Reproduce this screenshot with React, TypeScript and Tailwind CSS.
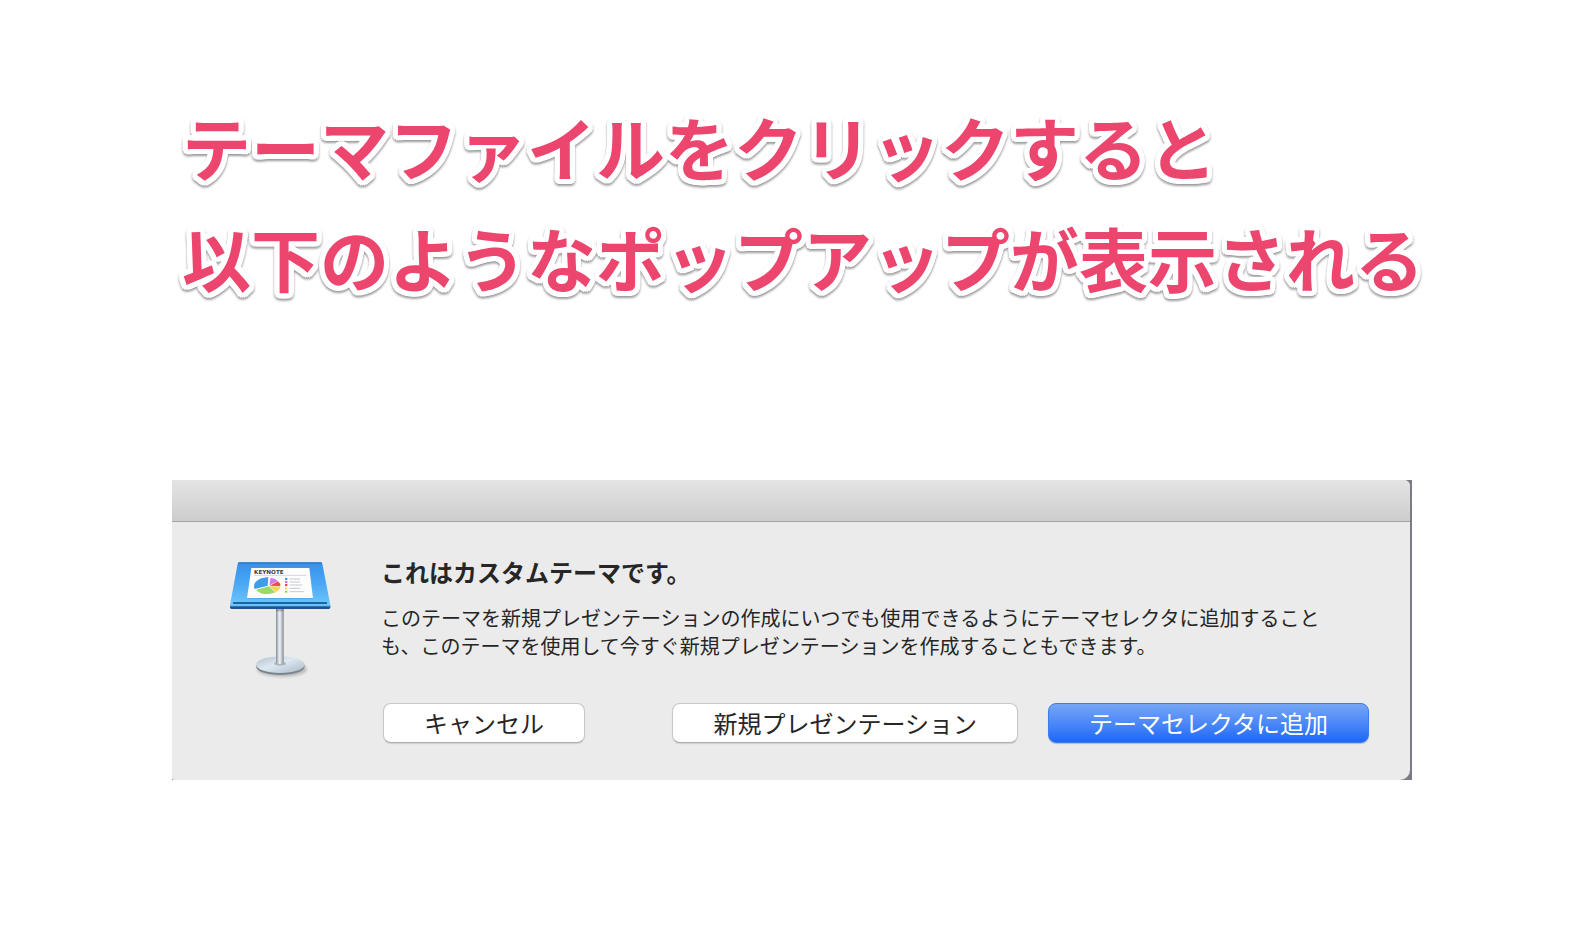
import clsx from "clsx";
import type { ButtonHTMLAttributes } from "react";

const legend = [
  { y: 87, color: "#3d9be9", width: 32 },
  { y: 96, color: "#c86be6", width: 32 },
  { y: 105, color: "#e8484c", width: 38 },
  { y: 115, color: "#fbd84b", width: 32 },
  { y: 125, color: "#86d65a", width: 42 },
];

const KeynoteIcon = () => (
  <svg
    className="w-[120px] h-[140px] shrink-0"
    viewBox="0 0 360 420"
    aria-hidden="true"
  >
    <defs>
      <linearGradient id="board" x1="0" y1="0" x2="0" y2="1">
        <stop offset="0" stopColor="#3590ee" />
        <stop offset="0.5" stopColor="#4ca8f4" />
        <stop offset="1" stopColor="#6fc8fb" />
      </linearGradient>
      <linearGradient id="pole" x1="0" y1="0" x2="1" y2="0">
        <stop offset="0" stopColor="#85888c" />
        <stop offset="0.25" stopColor="#c3cbd2" />
        <stop offset="0.5" stopColor="#eef4f9" />
        <stop offset="0.75" stopColor="#b9c1ca" />
        <stop offset="1" stopColor="#858483" />
      </linearGradient>
      <linearGradient id="base" x1="0" y1="0" x2="1" y2="1">
        <stop offset="0" stopColor="#b3bfcb" />
        <stop offset="0.45" stopColor="#dde8f1" />
        <stop offset="1" stopColor="#a9b8c7" />
      </linearGradient>
      <filter id="soft" x="-20%" y="-50%" width="140%" height="200%">
        <feGaussianBlur stdDeviation="5" />
      </filter>
    </defs>

    <ellipse cx="186" cy="358" rx="74" ry="22" fill="#777" opacity="0.45" filter="url(#soft)" />
    <ellipse cx="181" cy="349" rx="73" ry="26" fill="#7d868f" />
    <ellipse cx="181" cy="344" rx="73" ry="25" fill="url(#base)" />
    <ellipse cx="180" cy="341" rx="18" ry="6" fill="#8d979f" opacity="0.6" />
    <path d="M168 172h23v167q-11 6-23 0z" fill="url(#pole)" />
    <path d="M168 172h23v12h-23z" fill="#59616b" opacity="0.4" />

    <path d="M30 166h301v6q0 5-5 5H35q-5 0-5-5z" fill="#21548f" />
    <path d="M58 37H302q4 0 5 4L331 165q1 4-4 4H34q-5 0-4-4L53 41q1-4 5-4z" fill="url(#board)" />
    <path d="M55 39H305" stroke="#2b6ca9" strokeWidth="3" />
    <path d="M40 156H321V162H39z" fill="#1b65a8" />
    <path d="M32 166H329" stroke="#6ac2f3" strokeWidth="3" />
    <path d="M94 54H268L279 144H81z" fill="#2b75b5" opacity="0.35" transform="translate(0 2)" />
    <path d="M94 54H268L279 144H81z" fill="#fdfdfe" />
    <text
      x="102"
      y="72"
      fontSize="17"
      fontWeight="700"
      fill="#3c3f43"
      fontFamily="DejaVu Sans, sans-serif"
    >
      KEYNOTE
    </text>
    <path d="M102 76H258" stroke="#c3c6ca" strokeWidth="2" />

    <path d="M143 107L104 117C96 98 115 83 145 82z" fill="#3c9de9" />
    <path d="M148 106L152 83Q165 84 174 93z" fill="#cf7eea" />
    <path d="M149 107L174 94Q182 100 181 109z" fill="#e5524e" />
    <path d="M149 108L181 110Q180 119 167 126z" fill="#fbd452" />
    <path d="M147 109L166 127C146 137 115 132 109 119z" fill="#98dc66" />

    {legend.map((item) => (
      <g key={item.y}>
        <rect x="195" y={item.y - 3} width="7" height="6" fill={item.color} />
        <path
          d={`M209 ${item.y}h${item.width}`}
          stroke="#c4c8cc"
          strokeWidth="3"
        />
      </g>
    ))}
  </svg>
);

const DialogButton = ({
  primary = false,
  ...props
}: ButtonHTMLAttributes<HTMLButtonElement> & { primary?: boolean }) => (
  <button
    type="button"
    className={clsx(
      "h-10 px-10 rounded-lg border text-2xl leading-8 whitespace-nowrap",
      primary
        ? "text-white border-[#3b7df0] bg-linear-to-b from-[#76a5f6] to-[#1b67f8] shadow-[0_1px_1px_rgba(0,0,0,0.2)]"
        : "text-[#262626] bg-white border-[#c8c8c8] border-b-[#adadad] shadow-[0_1px_1px_rgba(0,0,0,0.12)]"
    )}
    {...props}
  />
);

const ThemeDialog = () => (
  <div className="bg-[#7a7b88]">
    <section
      role="dialog"
      aria-labelledby="dialog-title"
      aria-describedby="dialog-message"
      className="mr-0.5 bg-[#ebebeb] rounded-tr-md rounded-br-[10px] rounded-bl-xs overflow-hidden text-[#262626]"
    >
      <div className="h-[42px] border-b border-[#a3a3a3] bg-linear-to-b from-[#e4e4e4] to-[#cdcdcd]" />
      <div className="flex gap-[41px] pl-12 pr-[41px] pb-[37px]">
        <div className="pt-7">
          <KeynoteIcon />
        </div>
        <div className="flex-1 pt-9">
          <h2 id="dialog-title" className="text-2xl leading-7 font-bold">
            これはカスタムテーマです。
          </h2>
          <p id="dialog-message" className="mt-[18px] text-xl leading-7">
            このテーマを新規プレゼンテーションの作成にいつでも使用できるようにテーマセレクタに追加すること
            <br />
            も、このテーマを使用して今すぐ新規プレゼンテーションを作成することもできます。
          </p>
          <div className="mt-[43px] pl-0.5 flex justify-between">
            <DialogButton>キャンセル</DialogButton>
            <div className="flex gap-[30px]">
              <DialogButton>新規プレゼンテーション</DialogButton>
              <DialogButton primary>テーマセレクタに追加</DialogButton>
            </div>
          </div>
        </div>
      </div>
    </section>
  </div>
);

export default function App() {
  return (
    <main
      lang="ja"
      className="min-h-screen bg-white font-['Noto_Sans_CJK_JP',sans-serif]"
    >
      <h1 className="pt-[91px] pl-[182px] text-[69px] leading-[111px] font-bold whitespace-nowrap text-[#ec466e] [-webkit-text-stroke:4px_white] [paint-order:stroke_fill] [text-shadow:5px_0_white,-5px_0_white,0_5px_white,0_-5px_white,4px_4px_white,-4px_4px_white,4px_-4px_white,-4px_-4px_white,5px_2px_white,-5px_2px_white,5px_-2px_white,-5px_-2px_white,2px_5px_white,-2px_5px_white,2px_-5px_white,-2px_-5px_white] drop-shadow-[0_2px_1px_rgba(0,0,0,0.4)]">
        テーマファイルをクリックすると
        <br />
        以下のようなポップアップが表示される
      </h1>
      <div className="mt-[167px] pl-[172px] pr-[174px]">
        <ThemeDialog />
      </div>
    </main>
  );
}
